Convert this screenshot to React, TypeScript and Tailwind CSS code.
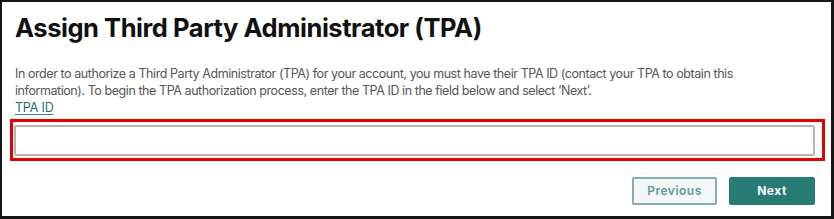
import React from "react";

export default function App() {
  return (
    <div className="w-[834px] h-[219px] bg-white" style={{ fontFamily: "Inter, 'Noto Sans', sans-serif" }}>
      <div className="w-full h-full border-t-2 border-l-2 border-r-[3px] border-b-[3px] border-[#161616] flex flex-col pl-[13px] pr-[16px]">
        <h1 className="mt-[10px] text-[25.5px] leading-[32px] font-bold text-[#111] tracking-[-0.45px]">
          Assign Third Party Administrator (TPA)
        </h1>
        <p className="mt-[21px] text-[12.5px] leading-[17px] text-[#555] tracking-[-0.43px] whitespace-nowrap">
          In order to authorize a Third Party Administrator (TPA) for your account, you must have their TPA ID (contact your TPA to obtain this
          <br />
          information). To begin the TPA authorization process, enter the TPA ID in the field below and select ‘Next’.
        </p>
        <a href="#" className="text-[12.5px] leading-[17px] text-[#1f6f6a] underline underline-offset-2 decoration-[#2a8a84] self-start tracking-[-0.2px]">
          TPA ID
        </a>
        <div className="-ml-[5px] -mr-[10px] mt-[3px] border-[3px] border-[#e60000] pt-[3px] pb-[2px] pl-[1px] pr-[7px]">
          <input type="text" className="block w-full h-[31px] border-2 border-[#b5b5b5] rounded-[2px] bg-white outline-none" />
        </div>
        <div className="flex justify-end gap-[12px] mt-[16px]">
          <button className="w-[85px] h-[28px] border-2 border-[#7fb0ad] rounded-[2px] bg-[#f4f6f7] text-[12px] font-semibold text-[#5e9a97] tracking-[0.5px]">
            Previous
          </button>
          <button className="w-[86px] h-[28px] rounded-[2px] bg-[#277b74] text-[12px] font-bold text-white tracking-[0.5px]">
            Next
          </button>
        </div>
      </div>
    </div>
  );
}
